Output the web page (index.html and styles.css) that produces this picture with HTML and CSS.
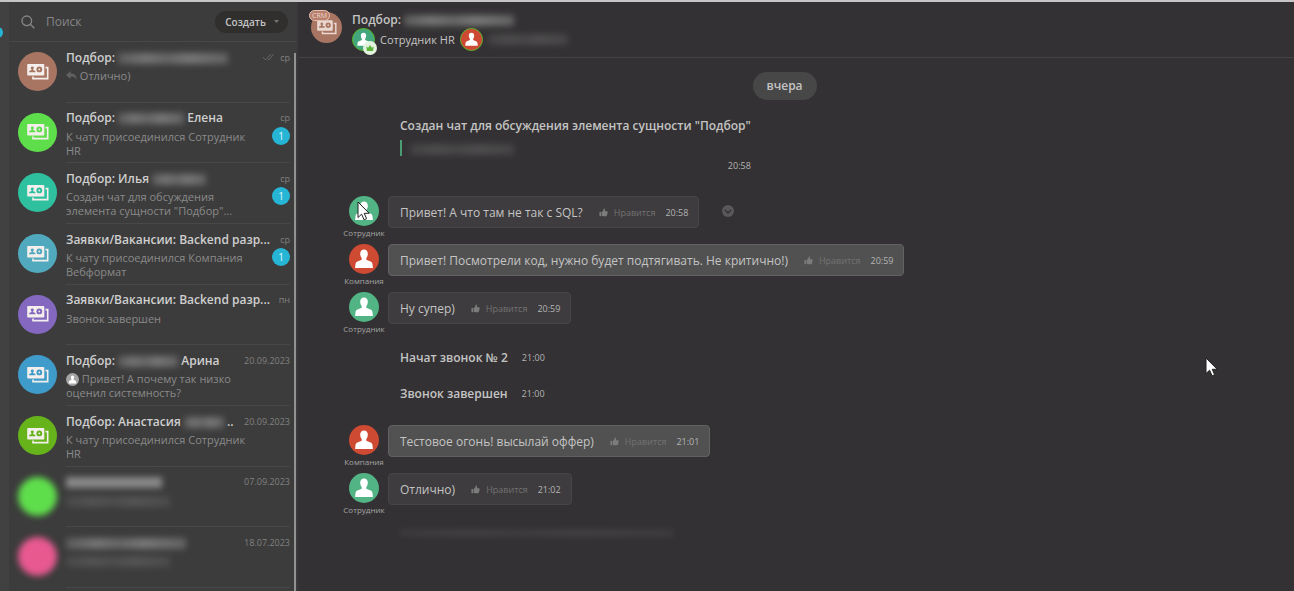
FILE: index.html
```html
<!DOCTYPE html>
<html lang="ru">
<head>
  <meta charset="UTF-8">
  <meta name="viewport" content="width=device-width, initial-scale=1.0">
  <title>Чат</title>
  <link rel="stylesheet" href="styles.css">
</head>
<body>
  <svg class="sprite" width="0" height="0" aria-hidden="true">
    <symbol id="cards" viewBox="0 0 22 16">
      <path fill="none" stroke="currentColor" stroke-width="1.6" d="M18.5 3.6h2.2v11H6v-2.2"/>
      <path fill="currentColor" fill-rule="evenodd" d="M1 0h15.500a.8.8 0 0 1 .8.8v9.900a.8.8 0 0 1-.8.8H1a.8.8 0 0 1-.8-.8V.8A.8.8 0 0 1 1 0zM5.300 2.500a1.500 1.500 0 0 0-.8 2.800v.8L2.200 7v1.200h6.200V7L6.100 6.100v-.8a1.500 1.500 0 0 0-.8-2.800zM12.300 2.500a2.900 2.900 0 1 0 0 5.800 2.900 2.900 0 0 0 0-5.800zm0 2a.9.9 0 1 1 0 1.800.9.9 0 0 1 0-1.800z"/>
    </symbol>
    <symbol id="user" viewBox="0 0 30 30">
      <path fill="#fff" d="M15 5.500c2.500 0 3.800 1.800 3.800 4.300 0 1.700-.6 3.300-1.500 4.200v1.800l4.800 2c1 .5 1.300 1.500 1.500 3.200l.3 3H6.100l.3-3c.2-1.700.5-2.700 1.500-3.200l4.800-2V14c-.9-.9-1.500-2.500-1.500-4.200 0-2.500 1.300-4.300 3.800-4.300z"/>
    </symbol>
    <symbol id="thumb" viewBox="0 0 10 10">
      <path fill="currentColor" d="M.5 4.500h2v4.700h-2zM3.200 4.400 5.200 2V.6c1.300-.3 1.900.8 1.500 2l-.3 1.100h2.500c.8 0 .9.900.5 1.300.3.400.2 1-.2 1.300.2.500 0 1-.3 1.200.1.900-.3 1.600-1.200 1.600H4.600l-1.400-.5z"/>
    </symbol>
    <symbol id="cursor" viewBox="0 0 14 20">
      <path fill="#fff" stroke="#222" stroke-width="1" d="M1 1v15.500l3.600-3.300 2.500 5.600 2.500-1.100-2.400-5.400h5z"/>
    </symbol>
  </svg>

  <div class="app">
    <div class="rail"><span class="rail-badge"></span></div>

    <aside class="sidebar">
      <header class="search">
        <svg class="search-icon" viewBox="0 0 14 14"><circle cx="5.800" cy="5.800" r="4.800"/><path d="M9.300 9.300l4 4"/></svg>
        <input class="search-input" type="search" placeholder="Поиск" aria-label="Поиск">
        <button class="create" type="button">Создать <svg class="caret" viewBox="0 0 5 3"><path d="M0 0h5L2.500 3z"/></svg></button>
      </header>

      <ul class="chats">
        <li><a class="chat" href="#">
          <span class="chat-icon brown"><svg><use href="#cards"/></svg></span>
          <span class="chat-body">
            <span class="chat-top"><span class="chat-title">Подбор: <i class="blur w110"></i></span><svg class="check" viewBox="0 0 12 8"><path d="M1 4l2.500 3L9 1M6 6l1 1 4.500-6"/></svg><time>ср</time></span>
            <span class="chat-text"><svg class="reply" viewBox="0 0 11 9"><path d="M4.500 0v2.500c4 0 6 2 6 6-1.500-2.500-3-3-6-3V8L0 4z"/></svg> Отлично)</span>
          </span>
        </a></li>
        <li><a class="chat" href="#">
          <span class="chat-icon green"><svg><use href="#cards"/></svg></span>
          <span class="chat-body">
            <span class="chat-top"><span class="chat-title">Подбор: <i class="blur w66"></i> Елена</span><time>ср</time></span>
            <span class="chat-text">К чату присоединился Сотрудник HR</span>
            <span class="count">1</span>
          </span>
        </a></li>
        <li><a class="chat" href="#">
          <span class="chat-icon teal"><svg><use href="#cards"/></svg></span>
          <span class="chat-body">
            <span class="chat-top"><span class="chat-title">Подбор: Илья <i class="blur w54"></i></span><time>ср</time></span>
            <span class="chat-text">Создан чат для обсуждения элемента сущности "Подбор"...</span>
            <span class="count">1</span>
          </span>
        </a></li>
        <li><a class="chat" href="#">
          <span class="chat-icon cyan"><svg><use href="#cards"/></svg></span>
          <span class="chat-body">
            <span class="chat-top"><span class="chat-title">Заявки/Вакансии: Backend разр...</span><time>ср</time></span>
            <span class="chat-text">К чату присоединился Компания Вебформат</span>
            <span class="count">1</span>
          </span>
        </a></li>
        <li><a class="chat" href="#">
          <span class="chat-icon purple"><svg><use href="#cards"/></svg></span>
          <span class="chat-body">
            <span class="chat-top"><span class="chat-title">Заявки/Вакансии: Backend разр...</span><time>пн</time></span>
            <span class="chat-text">Звонок завершен</span>
          </span>
        </a></li>
        <li><a class="chat" href="#">
          <span class="chat-icon blue"><svg><use href="#cards"/></svg></span>
          <span class="chat-body">
            <span class="chat-top"><span class="chat-title">Подбор: <i class="blur w60"></i> Арина</span><time>20.09.2023</time></span>
            <span class="chat-text"><svg class="mini-user" viewBox="0 0 30 30"><circle cx="15" cy="15" r="15" fill="#a4a4a4"/><use href="#user"/></svg> Привет! А почему так низко оценил системность?</span>
          </span>
        </a></li>
        <li><a class="chat" href="#">
          <span class="chat-icon lime"><svg><use href="#cards"/></svg></span>
          <span class="chat-body">
            <span class="chat-top"><span class="chat-title">Подбор: Анастасия <i class="blur w40"></i> ..</span><time>20.09.2023</time></span>
            <span class="chat-text">К чату присоединился Сотрудник HR</span>
          </span>
        </a></li>
        <li><a class="chat" href="#">
          <span class="chat-icon green hazy"></span>
          <span class="chat-body">
            <span class="chat-top"><span class="chat-title"><i class="blur bright w96"></i></span><time>07.09.2023</time></span>
            <span class="chat-text"><i class="blur dim w104"></i></span>
          </span>
        </a></li>
        <li><a class="chat" href="#">
          <span class="chat-icon pink hazy"></span>
          <span class="chat-body">
            <span class="chat-top"><span class="chat-title"><i class="blur w120"></i></span><time>18.07.2023</time></span>
            <span class="chat-text"><i class="blur dim w104"></i></span>
          </span>
        </a></li>
      </ul>
      <span class="scrollbar"></span>
    </aside>

    <main class="dialog">
      <header class="dialog-head">
        <span class="head-icon"><svg class="head-cards"><use href="#cards"/></svg><span class="crm">CRM</span></span>
        <div>
          <h1>Подбор: <i class="blur w110"></i></h1>
          <div class="members">
            <span class="member member-green"><svg><use href="#user"/></svg><span class="crown"><svg viewBox="0 0 10 8"><path d="M0 2l2.500 1.500L5 0l2.500 3.500L10 2 9 8H1z"/></svg></span></span>
            <span>Сотрудник HR</span>
            <span class="member member-red"><svg><use href="#user"/></svg></span>
            <i class="blur dim w80"></i>
          </div>
        </div>
      </header>

      <section class="messages">
        <div class="day">вчера</div>

        <article class="created">
          <h2>Создан чат для обсуждения элемента сущности "Подбор"</h2>
          <p class="quote"><i class="blur dim w104"></i></p>
          <time>20:58</time>
        </article>

        <article class="message">
          <div class="author"><span class="avatar staff"><svg><use href="#user"/></svg></span>Сотрудник<svg class="cursor cursor-avatar"><use href="#cursor"/></svg></div>
          <div class="bubble"><p>Привет! А что там не так с SQL?</p><button class="like" type="button"><svg><use href="#thumb"/></svg>Нравится</button><time>20:58</time></div>
          <button class="more" type="button" aria-label="Меню"><svg viewBox="0 0 12 12"><path d="M3 5l3 3 3-3"/></svg></button>
        </article>
        <article class="message">
          <div class="author"><span class="avatar company"><svg><use href="#user"/></svg></span>Компания</div>
          <div class="bubble own"><p>Привет! Посмотрели код, нужно будет подтягивать. Не критично!)</p><button class="like" type="button"><svg><use href="#thumb"/></svg>Нравится</button><time>20:59</time></div>
        </article>
        <article class="message">
          <div class="author"><span class="avatar staff"><svg><use href="#user"/></svg></span>Сотрудник</div>
          <div class="bubble"><p>Ну супер)</p><button class="like" type="button"><svg><use href="#thumb"/></svg>Нравится</button><time>20:59</time></div>
        </article>

        <div class="calls">
          <article class="system"><p>Начат звонок № 2</p><time>21:00</time></article>
          <article class="system"><p>Звонок завершен</p><time>21:00</time></article>
        </div>

        <article class="message">
          <div class="author"><span class="avatar company"><svg><use href="#user"/></svg></span>Компания</div>
          <div class="bubble own"><p>Тестовое огонь! высылай оффер)</p><button class="like" type="button"><svg><use href="#thumb"/></svg>Нравится</button><time>21:01</time></div>
        </article>
        <article class="message">
          <div class="author"><span class="avatar staff"><svg><use href="#user"/></svg></span>Сотрудник</div>
          <div class="bubble"><p>Отлично)</p><button class="like" type="button"><svg><use href="#thumb"/></svg>Нравится</button><time>21:02</time></div>
        </article>
        <div class="viewed"><i class="blur faint"></i></div>
      </section>
    </main>
  </div>
  <svg class="cursor cursor-free"><use href="#cursor"/></svg>
</body>
</html>
```
FILE: styles.css
```css
* {
  margin: 0;
  padding: 0;
  box-sizing: border-box;
}
body {
  background: #333133;
  color: #c4c4c4;
  font-family: "Open Sans", "Noto Sans", sans-serif;
  font-size: 12px;
  overflow: hidden;
}
button, input {
  font: inherit;
  color: inherit;
  background: none;
  border: 0;
  outline: 0;
}
.sprite {
  position: absolute;
}
.app {
  display: flex;
  height: 100vh;
  border-top: 2px solid #c6c6c8;
}

/* left rail */
.rail {
  position: relative;
  flex: 0 0 9px;
  background: #414141;
  overflow: hidden;
}
.rail-badge {
  position: absolute;
  top: 25px;
  left: -8px;
  width: 11px;
  height: 11px;
  border-radius: 50%;
  background: #27b5d5;
}

/* chat list */
.sidebar {
  position: relative;
  flex: 0 0 290px;
  display: flex;
  flex-direction: column;
  padding-bottom: 3px;
  background: #3c3c3c;
  border-right: 2px solid #363636;
}
.search {
  display: flex;
  align-items: center;
  height: 40px;
  padding: 0 9px 0 12px;
  border-bottom: 1px solid #484848;
}
.search-icon {
  width: 14px;
  height: 14px;
  fill: none;
  stroke: #858585;
  stroke-width: 1.4;
}
.search-input {
  flex: 1;
  min-width: 0;
  padding-left: 11px;
}
.search-input::placeholder {
  color: #858585;
}
.create {
  display: flex;
  align-items: center;
  gap: 8px;
  height: 22px;
  padding: 0 9px 0 10px;
  border-radius: 11px;
  background: #302f2e;
  font-size: 10px;
  font-weight: 600;
}
.caret {
  width: 5px;
  height: 3px;
  fill: #747474;
}
.chats {
  flex: 1;
  display: flex;
  flex-direction: column;
  list-style: none;
}
.chats li {
  flex: 1;
  min-height: 58px;
}
.chat {
  display: flex;
  gap: 9px;
  height: 100%;
  padding: 0 7px 0 9px;
  color: #8a8a8a;
  text-decoration: none;
}
.chat-icon {
  display: grid;
  place-items: center;
  flex: none;
  width: 39px;
  height: 39px;
  margin-top: 10px;
  border-radius: 50%;
  color: #f4efec;
}
.chat-icon svg {
  width: 22px;
  height: 16px;
}
.brown { background: #a87562; }
.green { background: #5fde4c; }
.teal { background: #2fc0a0; }
.cyan { background: #50a9bd; }
.purple { background: #8468bf; }
.blue { background: #3f9bc9; }
.lime { background: #67b31c; }
.pink { background: #e85990; }
.hazy {
  filter: blur(3px);
}
.chat-body {
  position: relative;
  flex: 1;
  min-width: 0;
  padding-top: 7px;
  border-bottom: 1px solid #484848;
}
.chat-top {
  display: flex;
  align-items: center;
  height: 16px;
}
.chat-title {
  flex: 1;
  color: #cfcfcf;
  font-weight: 600;
  white-space: nowrap;
}
.chat-top time {
  color: #808080;
  font-size: 9px;
}
.check {
  width: 12px;
  height: 8px;
  margin-right: 6px;
  fill: none;
  stroke: #666;
}
.chat-text {
  display: block;
  max-width: 190px;
  margin-top: 4px;
  font-size: 11px;
  line-height: 14px;
}
.reply {
  width: 11px;
  height: 9px;
  fill: #626262;
}
.mini-user {
  width: 13px;
  height: 13px;
  vertical-align: -3px;
}
.count {
  position: absolute;
  top: 24px;
  right: 0;
  width: 18px;
  height: 18px;
  border-radius: 50%;
  background: #27b5d5;
  color: #e2f7fb;
  font-size: 10px;
  line-height: 18px;
  text-align: center;
}
.scrollbar {
  position: absolute;
  top: 51px;
  right: 1px;
  bottom: 0;
  width: 2px;
  background: #929292;
}

/* blurred names */
.blur {
  display: inline-block;
  height: 11px;
  vertical-align: -2px;
  background: linear-gradient(90deg, #5c5c5c, #757575 25%, #666 45%, #787878 65%, #626262);
  filter: blur(3px);
}
.bright { background: #8a8a8a; }
.dim { opacity: .4; }
.w40 { width: 40px; }
.w54 { width: 54px; }
.w60 { width: 60px; }
.w66 { width: 66px; }
.w80 { width: 80px; }
.w96 { width: 96px; }
.w104 { width: 104px; }
.w110 { width: 110px; }
.w120 { width: 120px; }

/* dialog */
.dialog {
  flex: 1;
  min-width: 0;
}
.dialog-head {
  display: flex;
  gap: 10px;
  height: 56px;
  padding: 9px 12px 0;
  border-bottom: 1px solid #444244;
}
.dialog h1 {
  font-size: 12px;
  line-height: 17px;
  font-weight: 600;
}
.head-icon {
  position: relative;
  display: grid;
  place-items: center;
  width: 31px;
  height: 31px;
  margin-top: 1px;
  border-radius: 50%;
  background: #a87562;
  color: #ead8d0;
}
.head-cards {
  width: 20px;
  height: 15px;
}
.crm {
  position: absolute;
  top: -2px;
  left: -2px;
  padding: 0 2px;
  border: 1px solid #e5c0b2;
  border-radius: 6px;
  background: #b77f6b;
  color: #f0d9cf;
  font-size: 7px;
  line-height: 9px;
}
.members {
  display: flex;
  align-items: center;
  gap: 5px;
  height: 22px;
  font-size: 11px;
}
.member {
  position: relative;
  width: 23px;
  height: 23px;
  border: 1px solid #58b52a;
  border-radius: 50%;
}
.member svg {
  display: block;
  width: 21px;
  height: 21px;
}
.member-green { background: #42a77c; }
.member-red { background: #cd4933; }
.crown {
  position: absolute;
  right: -3px;
  bottom: -5px;
  display: grid;
  place-items: center;
  width: 14px;
  height: 14px;
  border-radius: 50%;
  background: #e4f3df;
}
.crown svg {
  width: 8px;
  height: 6px;
  fill: #5bb33a;
}
.messages {
  padding: 14px 66px 0 42px;
}
.day {
  width: 64px;
  margin: 0 auto;
  border-radius: 14px;
  background: #484748;
  font-weight: 600;
  line-height: 28px;
  text-align: center;
}
.created {
  width: max-content;
  margin: 17px 0 24px 59px;
}
.created h2 {
  font-size: 12px;
  font-weight: 600;
  line-height: 18px;
}
.quote {
  height: 16px;
  margin: 5px 0 4px;
  padding-left: 8px;
  border-left: 2px solid #4a9c75;
}
.created time {
  display: block;
  line-height: 12px;
  text-align: right;
}
.messages time {
  color: #b4b4b4;
  font-size: 9px;
}
.message {
  display: flex;
  align-items: flex-start;
  min-height: 48px;
}
.author {
  position: relative;
  display: flex;
  flex-direction: column;
  align-items: center;
  width: 46px;
  margin-right: 1px;
  color: #a5a5a5;
  font-size: 8px;
  line-height: 14px;
}
.avatar {
  width: 30px;
  height: 30px;
  border-radius: 50%;
}
.avatar svg {
  width: 30px;
  height: 30px;
}
.staff { background: #52b384; }
.company { background: #cf4a32; }
.bubble {
  display: flex;
  align-items: center;
  min-height: 32px;
  padding: 0 10px 0 11px;
  border: 1px solid #474547;
  border-radius: 4px;
  background: #3e3c3e;
}
.own {
  border-color: #626262;
  background: #515151;
}
.like {
  display: flex;
  align-items: center;
  gap: 6px;
  margin: 0 10px 0 16px;
  color: #737173;
  font-size: 9px;
}
.like svg {
  width: 9px;
  height: 9px;
  color: #7c7c7c;
}
.more {
  width: 12px;
  height: 12px;
  margin: 9px 0 0 23px;
  border-radius: 50%;
  background: #5a585a;
}
.more svg {
  display: block;
  fill: none;
  stroke: #333133;
  stroke-width: 1.5;
}
.calls {
  padding-bottom: 14px;
}
.system {
  display: flex;
  align-items: center;
  gap: 14px;
  height: 36px;
  padding-left: 59px;
  font-weight: 600;
}
.system:first-child {
  height: 35px;
}
.system time {
  font-weight: 400;
}
.viewed {
  padding: 0 59px;
}
.faint {
  width: 274px;
  height: 6px;
  opacity: .28;
}

/* mouse pointers */
.cursor {
  position: absolute;
  width: 14px;
  height: 20px;
}
.cursor-avatar {
  top: 5px;
  left: 16px;
}
.cursor-free {
  top: 357px;
  left: 1205px;
}
```
